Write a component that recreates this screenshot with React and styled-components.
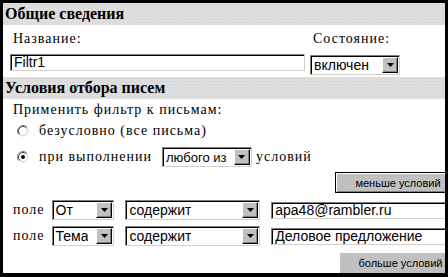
import React from 'react'
import styled, { createGlobalStyle } from 'styled-components'

const GlobalStyle = createGlobalStyle`
  html, body {
    margin: 0;
    padding: 0;
    background: #fff;
    overflow: hidden;
  }
`

function Arrow() {
  return (
    <ArrowButton>
      <svg width="7" height="4" viewBox="0 0 7 4">
        <path d="M0 0h7L3.5 4z" fill="#000" />
      </svg>
    </ArrowButton>
  )
}

function Select({ value, width, small }) {
  return (
    <SelectBox $width={width}>
      <SelectText $small={small}>{value}</SelectText>
      <Arrow />
    </SelectBox>
  )
}

function Radio({ checked }) {
  return (
    <svg width="12" height="12" viewBox="0 0 12 12">
      <circle cx="6" cy="6" r="5" fill="#fff" />
      <path d="M2.11 9.89A5.5 5.5 0 0 1 9.89 2.11" fill="none" stroke="#808080" />
      <path d="M2.82 9.18A4.5 4.5 0 0 1 9.18 2.82" fill="none" stroke="#404040" />
      <path d="M9.89 2.11A5.5 5.5 0 0 1 2.11 9.89" fill="none" stroke="#f0f0f0" />
      <path d="M9.18 2.82A4.5 4.5 0 0 1 2.82 9.18" fill="none" stroke="#d4d0c8" />
      {checked && <circle cx="6" cy="6" r="2" fill="#000" />}
    </svg>
  )
}

export default function App() {
  return (
    <>
      <GlobalStyle />
      <Frame>
        <Page>
          <Header>Общие сведения</Header>
          <General>
            <Label>Название:</Label>
            <Label>Состояние:</Label>
            <TextInput $width={295}>Filtr1</TextInput>
            <Select value="включен" width={90} />
          </General>

          <Header>Условия отбора писем</Header>
          <Intro>Применить фильтр к письмам:</Intro>
          <RadioRow $top={4}>
            <Radio />
            <Label>безусловно (все письма)</Label>
          </RadioRow>
          <RadioRow $top={7}>
            <Radio checked />
            <Label>при выполнении</Label>
            <Spaced>
              <Select value="любого из" width={90} small />
            </Spaced>
            <Label>условий</Label>
          </RadioRow>
          <ButtonRow $top={5}>
            <Button $width={126} $raised>меньше условий</Button>
          </ButtonRow>

          <CondRow $top={7}>
            <Label>поле</Label>
            <Select value="От" width={63} />
            <Select value="содержит" width={135} />
            <TextInput $width={190}>apa48@rambler.ru</TextInput>
          </CondRow>
          <CondRow $top={6}>
            <Label>поле</Label>
            <Select value="Тема" width={63} />
            <Select value="содержит" width={135} />
            <TextInput $width={190}>Деловое предложение</TextInput>
          </CondRow>
          <ButtonRow $top={7}>
            <Button $width={121}>больше условий</Button>
          </ButtonRow>
        </Page>
      </Frame>
    </>
  )
}

const Frame = styled.div`
  width: 448px;
  height: 277px;
  box-sizing: border-box;
  border: 3px solid #000;
  border-bottom-width: 4px;
  overflow: hidden;
  background: #fff;
`
const Page = styled.div`
  width: 458px;
  font-family: "Liberation Serif", "Times New Roman", serif;
  font-size: 14px;
  letter-spacing: 1px;
  color: #000;
`
const Header = styled.div`
  height: 22px;
  line-height: 22px;
  padding-left: 2px;
  background-color: #dedede;
  background-image: radial-gradient(#d2d2d2 0.7px, transparent 0.8px);
  background-size: 3px 3px;
  font-family: "Liberation Serif", "Times New Roman", serif;
  font-weight: 700;
  font-size: 16px;
  letter-spacing: 0;
`
const General = styled.div`
  box-sizing: border-box;
  height: 52px;
  padding: 6px 0 0 7px;
  display: grid;
  grid-template-columns: 295px 90px;
  column-gap: 5px;
  row-gap: 5px;
  align-items: start;
  & > span {
    padding-left: 3px;
  }
`
const Label = styled.span`
  line-height: 16px;
  white-space: nowrap;
`
const TextInput = styled.div`
  box-sizing: border-box;
  width: ${p => p.$width}px;
  height: 17px;
  padding: 0 3px;
  border-style: solid;
  border-width: 1px;
  border-color: #808080 #d4d0c8 #d4d0c8 #808080;
  box-shadow: inset 1px 1px 0 #000;
  font-family: "Liberation Sans", Arial, sans-serif;
  font-size: 14px;
  letter-spacing: 0;
  line-height: 15px;
  white-space: nowrap;
  overflow: hidden;
`
const SelectBox = styled.div`
  box-sizing: border-box;
  width: ${p => p.$width}px;
  height: 20px;
  display: flex;
  align-items: center;
  justify-content: space-between;
  padding: 1px;
  border-style: solid;
  border-width: 1px;
  border-color: #808080 #d4d0c8 #d4d0c8 #808080;
  box-shadow: inset 1px 1px 0 #000;
  background: #fff;
  ${General} & {
    margin-top: 1px;
  }
`
const SelectText = styled.span`
  padding-left: 2px;
  font-family: "Liberation Sans", Arial, sans-serif;
  font-size: ${p => (p.$small ? 13 : 14)}px;
  letter-spacing: 0;
  white-space: nowrap;
  overflow: hidden;
`
const ArrowButton = styled.span`
  box-sizing: border-box;
  flex: none;
  width: 16px;
  height: 16px;
  display: flex;
  align-items: center;
  justify-content: center;
  background: #c0c0c0;
  border-style: solid;
  border-width: 1px;
  border-color: #fff #000 #000 #fff;
  box-shadow: inset -1px -1px 0 #808080;
`
const Intro = styled.div`
  margin-top: 3px;
  padding-left: 10px;
  line-height: 16px;
`
const RadioRow = styled.div`
  display: flex;
  align-items: center;
  gap: 10px;
  margin-top: ${p => p.$top}px;
  padding-left: 14px;
  min-height: 18px;
`
const Spaced = styled.span`
  margin: 0 -6px 0 0;
`
const ButtonRow = styled.div`
  display: flex;
  justify-content: flex-end;
  margin-top: ${p => p.$top}px;
`
const Button = styled.div`
  box-sizing: border-box;
  width: ${p => p.$width}px;
  height: ${p => (p.$raised ? 21 : 20)}px;
  display: flex;
  align-items: center;
  justify-content: center;
  background: #c0c0c0;
  font-family: "Liberation Sans", Arial, sans-serif;
  font-size: 11px;
  letter-spacing: 0;
  border: ${p => (p.$raised ? '1px solid #000' : 'none')};
  box-shadow: ${p => (p.$raised ? 'inset 1px 1px 0 #fff, inset -1px -1px 0 #808080' : 'none')};
`
const CondRow = styled.div`
  display: flex;
  align-items: center;
  gap: 11px;
  margin-top: ${p => p.$top}px;
  padding-left: 10px;
  height: 20px;
  & > span {
    margin-right: -4px;
  }
`
